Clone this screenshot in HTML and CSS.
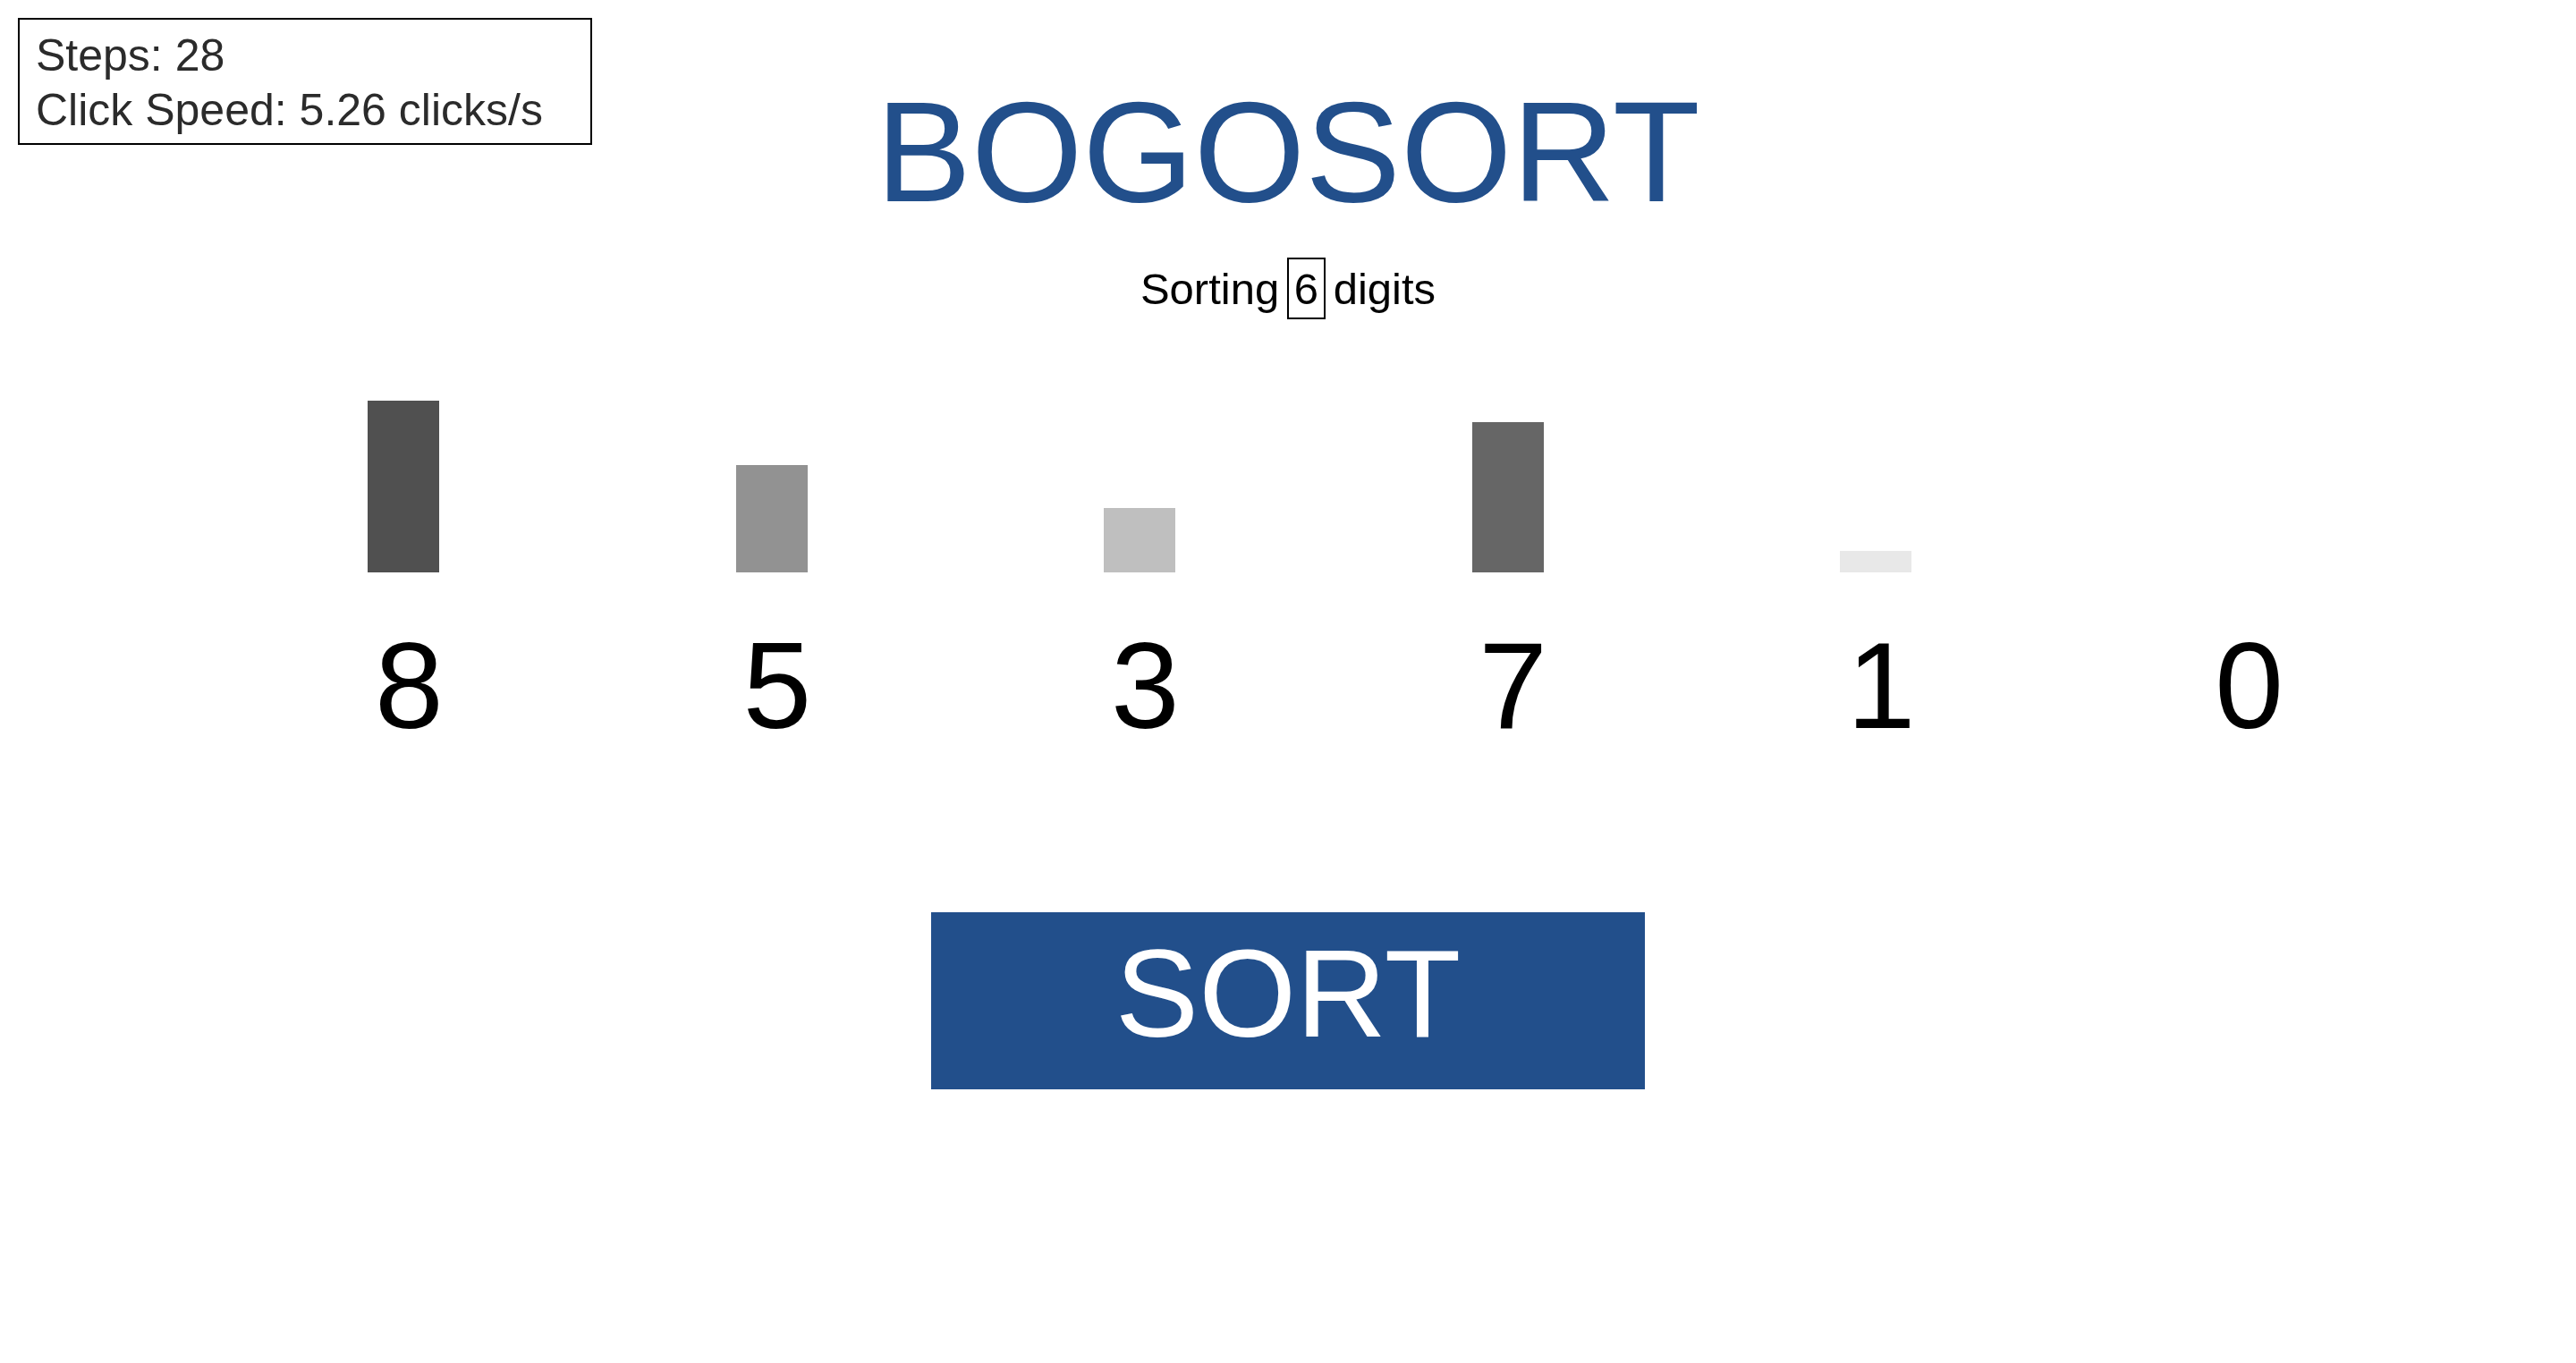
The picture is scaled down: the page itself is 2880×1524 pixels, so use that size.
FILE: index.html
```html
<!DOCTYPE html>
<html lang="en">
<head>
<meta charset="utf-8">
<title>Bogosort</title>
<link rel="stylesheet" href="styles.css">
</head>
<body>
<div class="stats">
  <div class="stats-line">Steps: 28</div>
  <div class="stats-line">Click Speed: 5.26 clicks/s</div>
</div>
<main class="page">
  <h1 class="title">BOGOSORT</h1>
  <p class="subtitle">Sorting <span class="count">6</span> digits</p>
  <section class="digits">
    <div class="col"><div class="bar-area"><div class="bar" style="height:192px;background:#505050"></div></div><div class="digit">8</div></div>
    <div class="col"><div class="bar-area"><div class="bar" style="height:120px;background:#929292"></div></div><div class="digit">5</div></div>
    <div class="col"><div class="bar-area"><div class="bar" style="height:72px;background:#bfbfbf"></div></div><div class="digit">3</div></div>
    <div class="col"><div class="bar-area"><div class="bar" style="height:168px;background:#666666"></div></div><div class="digit">7</div></div>
    <div class="col"><div class="bar-area"><div class="bar" style="height:24px;background:#e8e8e8"></div></div><div class="digit">1</div></div>
    <div class="col"><div class="bar-area"><div class="bar" style="height:0px;background:#ffffff"></div></div><div class="digit">0</div></div>
  </section>
  <div class="actions">
    <button class="sort-btn" type="button">SORT</button>
  </div>
</main>
</body>
</html>
```

FILE: styles.css
```css
html, body {
  margin: 0;
  padding: 0;
  background: #ffffff;
}

body {
  font-family: "Liberation Sans", Arial, Helvetica, sans-serif;
  color: #000000;
}

.stats {
  position: absolute;
  top: 20px;
  left: 20px;
  width: 642px;
  box-sizing: border-box;
  border: 2px solid #000000;
  padding: 10px 18px 6px 18px;
  font-size: 50px;
  line-height: 61px;
  color: #2b2b2b;
}

.page {
  text-align: center;
}

.title {
  margin: 0;
  padding-top: 78px;
  font-size: 160px;
  line-height: 184px;
  font-weight: normal;
  color: #224f8b;
}

.subtitle {
  margin: 26px 0 0 0;
  font-size: 49px;
  line-height: normal;
  word-spacing: -5px;
}

.count {
  display: inline-block;
  border: 2px solid #000000;
  padding: 5px 6px 4px 6px;
  line-height: normal;
  word-spacing: normal;
}

.digits {
  display: grid;
  grid-template-columns: repeat(6, 1fr);
  padding-left: calc(100% / 7);
  margin-top: 67px;
}

.col {
  display: flex;
  flex-direction: column;
  align-items: flex-start;
}

.bar-area {
  height: 216px;
  display: flex;
  align-items: flex-end;
}

.bar {
  width: 80px;
}

.digit {
  width: 92px;
  margin-top: 57px;
  font-size: 138px;
  line-height: 138px;
  text-align: center;
}

.actions {
  display: flex;
  justify-content: center;
  margin-top: 185px;
}

.sort-btn {
  width: 798px;
  height: 198px;
  border: none;
  padding: 0 0 16px 0;
  margin: 0;
  background: #224f8b;
  color: #ffffff;
  font-family: "Liberation Sans", Arial, Helvetica, sans-serif;
  font-size: 140px;
  line-height: 1;
  cursor: pointer;
}
```
